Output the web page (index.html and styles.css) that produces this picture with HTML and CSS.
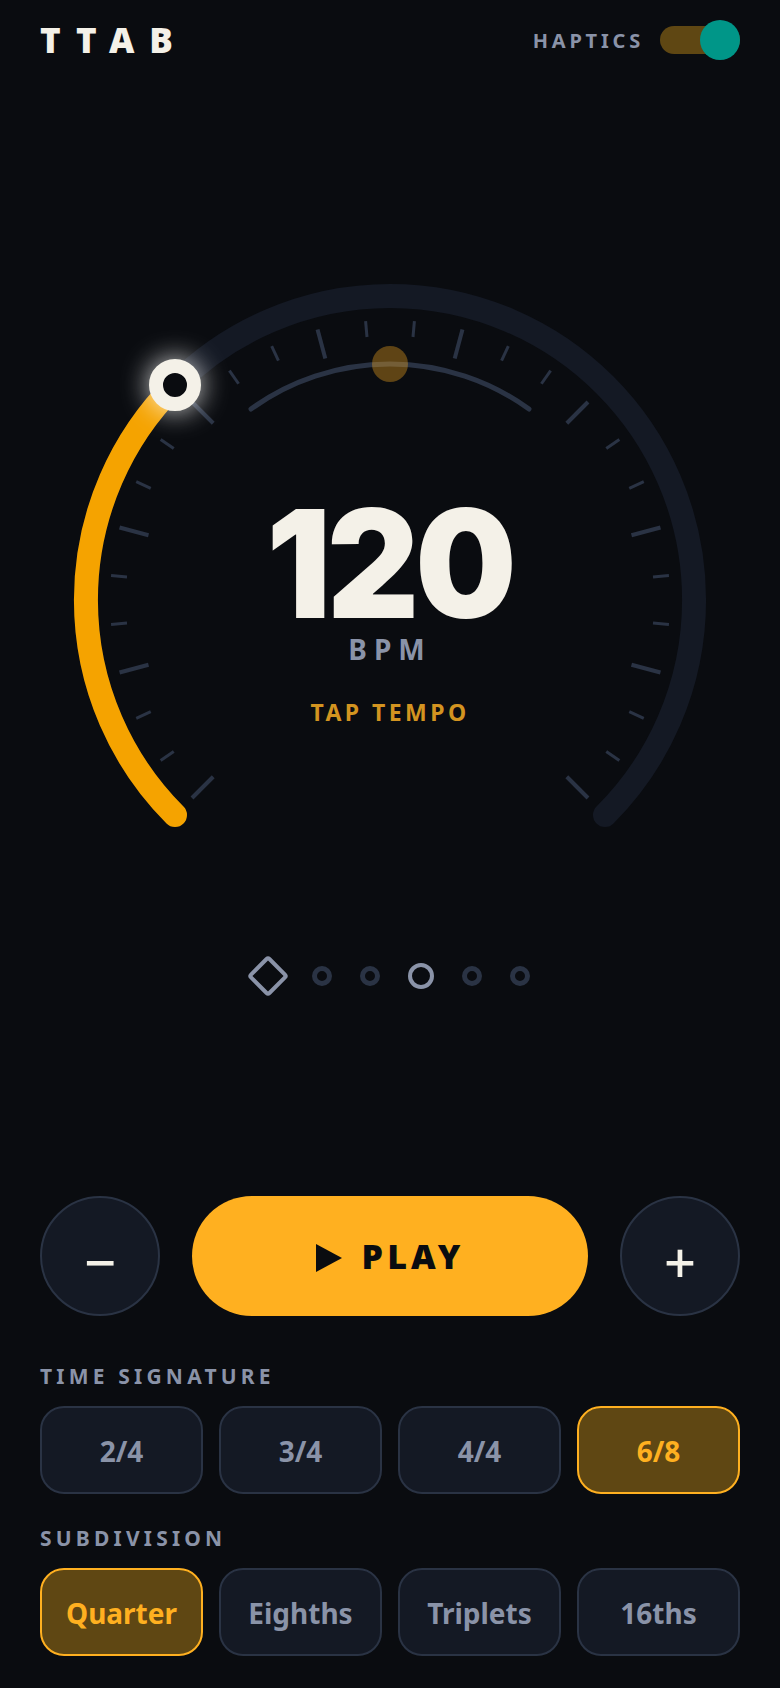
FILE: index.html
```html
<!DOCTYPE html>
<html lang="en">

<head>
  <meta charset="UTF-8">
  <meta name="viewport" content="width=device-width, initial-scale=1.0">
  <title>TTAB</title>
  <link rel="stylesheet" href="styles.css">
</head>

<body>
  <header class="topbar">
    <div class="logo">TTAB</div>
    <div class="haptics">
      <span class="haptics-label">HAPTICS</span>
      <div class="toggle"><span class="toggle-thumb"></span></div>
    </div>
  </header>

  <section class="dial">
    <svg class="dial-svg" width="700" height="600" viewBox="0 0 700 600">
      <path class="arc-track" d="M135 545 A304 304 0 1 1 565 545" />
      <path class="arc-value" d="M135 545 A304 304 0 0 1 135 115" />
      <!-- 28 ticks, every third one is long -->
      <g class="ticks">
        <line class="major" x1="350" y1="50" x2="350" y2="80" transform="rotate(-135 350 330)" />
        <line x1="350" y1="50" x2="350" y2="66" transform="rotate(-125 350 330)" />
        <line x1="350" y1="50" x2="350" y2="66" transform="rotate(-115 350 330)" />
        <line class="major" x1="350" y1="50" x2="350" y2="80" transform="rotate(-105 350 330)" />
        <line x1="350" y1="50" x2="350" y2="66" transform="rotate(-95 350 330)" />
        <line x1="350" y1="50" x2="350" y2="66" transform="rotate(-85 350 330)" />
        <line class="major" x1="350" y1="50" x2="350" y2="80" transform="rotate(-75 350 330)" />
        <line x1="350" y1="50" x2="350" y2="66" transform="rotate(-65 350 330)" />
        <line x1="350" y1="50" x2="350" y2="66" transform="rotate(-55 350 330)" />
        <line class="major" x1="350" y1="50" x2="350" y2="80" transform="rotate(-45 350 330)" />
        <line x1="350" y1="50" x2="350" y2="66" transform="rotate(-35 350 330)" />
        <line x1="350" y1="50" x2="350" y2="66" transform="rotate(-25 350 330)" />
        <line class="major" x1="350" y1="50" x2="350" y2="80" transform="rotate(-15 350 330)" />
        <line x1="350" y1="50" x2="350" y2="66" transform="rotate(-5 350 330)" />
        <line x1="350" y1="50" x2="350" y2="66" transform="rotate(5 350 330)" />
        <line class="major" x1="350" y1="50" x2="350" y2="80" transform="rotate(15 350 330)" />
        <line x1="350" y1="50" x2="350" y2="66" transform="rotate(25 350 330)" />
        <line x1="350" y1="50" x2="350" y2="66" transform="rotate(35 350 330)" />
        <line class="major" x1="350" y1="50" x2="350" y2="80" transform="rotate(45 350 330)" />
        <line x1="350" y1="50" x2="350" y2="66" transform="rotate(55 350 330)" />
        <line x1="350" y1="50" x2="350" y2="66" transform="rotate(65 350 330)" />
        <line class="major" x1="350" y1="50" x2="350" y2="80" transform="rotate(75 350 330)" />
        <line x1="350" y1="50" x2="350" y2="66" transform="rotate(85 350 330)" />
        <line x1="350" y1="50" x2="350" y2="66" transform="rotate(95 350 330)" />
        <line class="major" x1="350" y1="50" x2="350" y2="80" transform="rotate(105 350 330)" />
        <line x1="350" y1="50" x2="350" y2="66" transform="rotate(115 350 330)" />
        <line x1="350" y1="50" x2="350" y2="66" transform="rotate(125 350 330)" />
        <line class="major" x1="350" y1="50" x2="350" y2="80" transform="rotate(135 350 330)" />
      </g>
      <path class="arc-inner" d="M211 139 A237 237 0 0 1 489 139" />
      <circle class="pendulum" cx="350" cy="94" r="18" />
      <circle class="knob" cx="135" cy="115" r="19" />
    </svg>
    <div class="readout">
      <div class="bpm-value">120</div>
      <div class="bpm-unit">BPM</div>
      <div class="tap">TAP TEMPO</div>
    </div>
  </section>

  <div class="beats">
    <span class="beat-accent"></span>
    <span class="beat"></span>
    <span class="beat"></span>
    <span class="beat active"></span>
    <span class="beat"></span>
    <span class="beat"></span>
  </div>

  <div class="transport">
    <button type="button" class="round-btn">−</button>
    <button type="button" class="play-btn">
      <svg class="play-icon" width="26" height="28" viewBox="0 0 26 28">
        <path d="M0 0 L26 14 L0 28 Z" />
      </svg>
      <span>PLAY</span>
    </button>
    <button type="button" class="round-btn">+</button>
  </div>

  <div class="group-label">TIME SIGNATURE</div>
  <div class="options">
    <button type="button" class="option">2/4</button>
    <button type="button" class="option">3/4</button>
    <button type="button" class="option">4/4</button>
    <button type="button" class="option active">6/8</button>
  </div>

  <div class="group-label">SUBDIVISION</div>
  <div class="options">
    <button type="button" class="option active">Quarter</button>
    <button type="button" class="option">Eighths</button>
    <button type="button" class="option">Triplets</button>
    <button type="button" class="option">16ths</button>
  </div>
</body>

</html>
```
FILE: styles.css
```css
* {
  box-sizing: border-box;
}

body {
  margin: 0;
  padding: 20px 40px 33px;
  background-color: #0a0c10;
  color: #f4f1e8;
  font-family: "Noto Sans", sans-serif;
}

button {
  font-family: inherit;
  padding: 0;
  cursor: pointer;
}

/* top bar */
.topbar {
  display: flex;
  justify-content: space-between;
  align-items: center;
  height: 40px;
}

.logo {
  font-size: 35px;
  font-weight: 900;
  line-height: 40px;
  letter-spacing: 0.42em;
}

.haptics {
  display: flex;
  align-items: center;
  gap: 16px;
}

.haptics-label {
  font-size: 20px;
  font-weight: 700;
  letter-spacing: 0.19em;
  color: #8a93a8;
}

.toggle {
  position: relative;
  width: 80px;
  height: 28px;
  border-radius: 14px;
  background-color: #5f4713;
}

.toggle-thumb {
  position: absolute;
  right: 0;
  top: -6px;
  width: 40px;
  height: 40px;
  border-radius: 50%;
  background-color: #009688;
}

/* dial */
.dial {
  display: grid;
  margin-top: 210px;
}

.dial-svg,
.readout {
  grid-area: 1 / 1;
}

.dial-svg {
  display: block;
  overflow: visible;
}

.arc-track,
.arc-value {
  fill: none;
  stroke-width: 24;
  stroke-linecap: round;
}

.arc-track {
  stroke: #141924;
}

.arc-value {
  stroke: #f5a300;
}

.ticks line {
  stroke: #2a3344;
  stroke-width: 3;
}

.ticks .major {
  stroke-width: 4;
}

.arc-inner {
  fill: none;
  stroke: #2a3344;
  stroke-width: 5;
  stroke-linecap: round;
}

.pendulum {
  fill: #ffb020;
  opacity: 0.35;
}

.knob {
  fill: #0a0c10;
  stroke: #f4f1e8;
  stroke-width: 14;
  filter: drop-shadow(0 0 14px rgba(255, 255, 255, 0.85));
}

.readout {
  display: flex;
  flex-direction: column;
  align-items: center;
  padding-top: 228px;
}

.bpm-value {
  font-family: Inter, sans-serif;
  font-size: 150px;
  font-weight: 900;
  line-height: 132px;
  letter-spacing: -0.027em;
  transform: scaleX(0.95);
}

.bpm-unit {
  font-size: 28px;
  font-weight: 700;
  line-height: 38px;
  letter-spacing: 0.25em;
  color: #8a93a8;
}

.tap {
  margin-top: 29px;
  font-size: 23px;
  font-weight: 700;
  line-height: 30px;
  letter-spacing: 0.15em;
  color: #d39420;
}

/* beat dots */
.beats {
  display: flex;
  justify-content: center;
  align-items: center;
  gap: 28px;
  height: 40px;
  margin-top: 86px;
}

.beat-accent {
  width: 30px;
  height: 30px;
  margin: 0 1px 0 3px;
  border: 4px solid #8a93a8;
  border-radius: 4px;
  transform: rotate(45deg);
}

.beat {
  width: 20px;
  height: 20px;
  border: 5px solid #2a3344;
  border-radius: 50%;
}

.beat.active {
  width: 26px;
  height: 26px;
  border: 4px solid #8a93a8;
}

/* play row */
.transport {
  display: flex;
  gap: 32px;
  margin-top: 200px;
  margin-bottom: 45px;
}

.round-btn {
  width: 120px;
  height: 120px;
  flex: none;
  padding-top: 10px;
  border: 2px solid #2a3344;
  border-radius: 50%;
  background-color: #141924;
  color: #f4f1e8;
  font-size: 56px;
  font-weight: 500;
  line-height: 1;
}

.play-btn {
  flex: 1;
  display: flex;
  justify-content: center;
  align-items: center;
  gap: 20px;
  height: 120px;
  border: none;
  border-radius: 60px;
  background-color: #ffb020;
  color: #0a0c10;
  font-size: 34px;
  font-weight: 900;
  letter-spacing: 0.12em;
}

.play-icon {
  margin-top: 4px;
  fill: #0a0c10;
}

/* option groups */
.group-label {
  font-size: 21px;
  font-weight: 700;
  line-height: 30px;
  letter-spacing: 0.2em;
  color: #8a93a8;
}

.options {
  display: grid;
  grid-template-columns: repeat(4, 1fr);
  gap: 16px;
  margin-top: 15px;
  margin-bottom: 29px;
}

.option {
  height: 88px;
  padding-top: 2px;
  border: 2px solid #2a3344;
  border-radius: 24px;
  background-color: #141924;
  color: #8a93a8;
  font-size: 28px;
  font-weight: 700;
}

.option.active {
  border-color: #ffb020;
  background-color: #5f4713;
  color: #ffb020;
}
```
